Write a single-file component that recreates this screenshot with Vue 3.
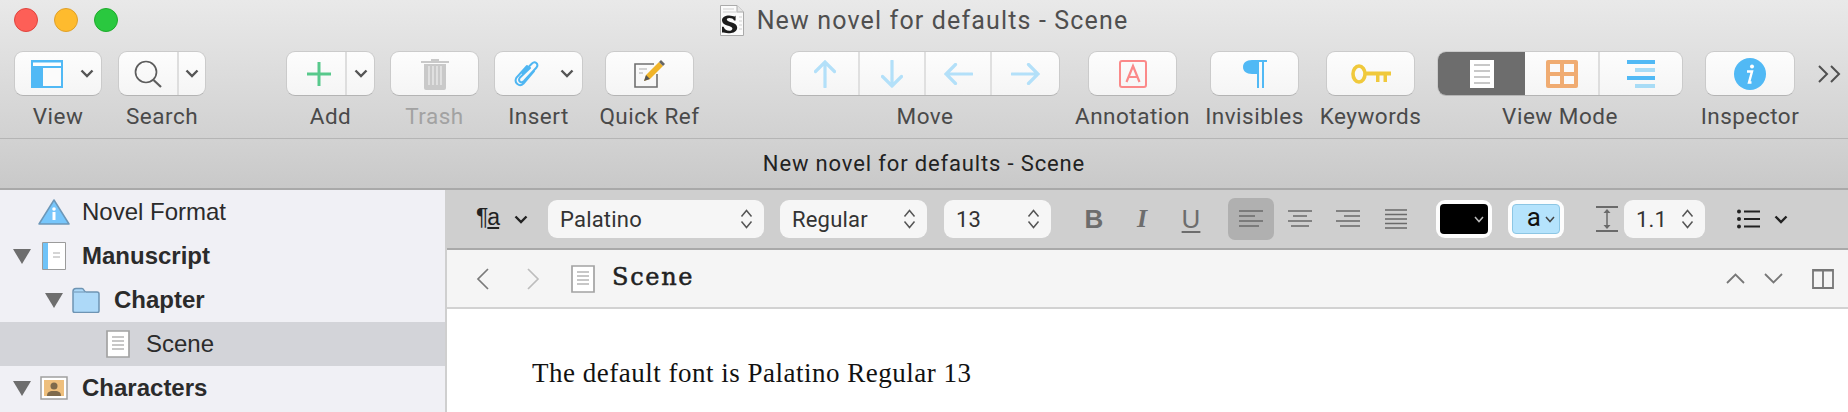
<script setup>
const rows = [
  { label: 'Novel Format', level: 0, icon: 'info', open: false, bold: false },
  { label: 'Manuscript', level: 0, icon: 'book', open: true, bold: true },
  { label: 'Chapter', level: 1, icon: 'folder', open: true, bold: true },
  { label: 'Scene', level: 2, icon: 'doc', open: false, bold: false, selected: true },
  { label: 'Characters', level: 0, icon: 'person', open: true, bold: true },
]
</script>

<template>
  <div class="window">
    <header class="chrome">
      <div class="titlebar">
        <div class="lights">
          <span class="light red"></span>
          <span class="light yellow"></span>
          <span class="light green"></span>
        </div>
        <div class="title">
          <svg width="24" height="31" viewBox="0 0 24 31">
            <path d="M.5.5H17L23.5 7V30.5H.5Z" fill="#fbfbfb" stroke="#aaa"/>
            <path d="M17 .5V7H23.5" fill="#e4e4e4" stroke="#aaa"/>
            <path d="M3 4H14M3 7H20M19 12H22M19 16H22M19 20H22M19 24H22" stroke="#cfcfcf"/>
            <path transform="translate(1.200 5) scale(.8)" d="M1 13c0-4 4-6 9-6 3 0 5 1 7 1l1-1v6h-2c-1-2-3-3-6-3-2 0-3 1-3 2 0 4 13 3 13 10 0 5-5 7-9 7-3 0-6-1-8-1H1v-7h2c1 3 4 5 7 5 2 0 4-1 4-3 0-4-13-3-13-10Z" fill="#1c1c1c"/>
          </svg>
          <span>New novel for defaults - Scene</span>
        </div>
      </div>

      <div class="toolbar">
        <div class="item view">
          <div class="btn">
            <span class="seg wide">
              <svg width="32" height="28" viewBox="0 0 32 28"><path d="M0 0H32V28H0Z" fill="#51b9f5"/><path d="M2 2.500H30V6H2Z" fill="#fff"/><path d="M12 8H30V26H12Z" fill="#fbfbfb"/></svg>
            </span>
            <span class="seg chev">
              <svg width="14" height="9" viewBox="0 0 14 9"><path d="M1.500 1.500 7 7l5.500-5.500" fill="none" stroke="#555" stroke-width="2.400"/></svg>
            </span>
          </div>
          <span class="label">View</span>
        </div>
        <div class="item search">
          <div class="btn">
            <span class="seg main">
              <svg width="28" height="28" viewBox="0 0 28 28"><circle cx="12" cy="12" r="10.500" fill="none" stroke="#5d5d5d" stroke-width="1.700"/><path d="M19.500 20 27 27" stroke="#5d5d5d" stroke-width="2.200"/></svg>
            </span>
            <span class="seg drop">
              <svg width="14" height="9" viewBox="0 0 14 9"><path d="M1.500 1.500 7 7l5.500-5.500" fill="none" stroke="#555" stroke-width="2.400"/></svg>
            </span>
          </div>
          <span class="label">Search</span>
        </div>
        <div class="item add">
          <div class="btn">
            <span class="seg main nudge">
              <svg width="24" height="24" viewBox="0 0 24 24"><path d="M10.500 0h3v10.500H24v3H13.500V24h-3V13.500H0v-3h10.500Z" fill="#58c98c"/></svg>
            </span>
            <span class="seg drop">
              <svg width="14" height="9" viewBox="0 0 14 9"><path d="M1.500 1.500 7 7l5.500-5.500" fill="none" stroke="#555" stroke-width="2.400"/></svg>
            </span>
          </div>
          <span class="label">Add</span>
        </div>
        <div class="item trash">
          <div class="btn">
            <span class="seg full">
              <svg width="28" height="32" viewBox="0 0 28 32"><path d="M10 3V1h8v2h10v2H0V3Z" fill="#c9c9c9"/><path d="M3 6H25V30a2 2 0 0 1-2 2H5a2 2 0 0 1-2-2Z" fill="#c9c9c9"/><path d="M8 8V27M12 8V27M16 8V27M20 8V27" stroke="#f2f2f2" stroke-width="1.100"/></svg>
            </span>
          </div>
          <span class="label muted">Trash</span>
        </div>
        <div class="item insert">
          <div class="btn">
            <span class="seg wide">
              <svg width="26" height="28" viewBox="0 0 26 28"><path d="M8.500 13 18 3.500c3-3 7 .5 4.500 4L10 21c-3 3-6.500 0-4-3.500L16 8M20 11 9.500 23.500c-4 4-10-.5-7-6L13 6" fill="none" stroke="#4fb6f2" stroke-width="2" stroke-linecap="round"/></svg>
            </span>
            <span class="seg chev">
              <svg width="14" height="9" viewBox="0 0 14 9"><path d="M1.500 1.500 7 7l5.500-5.500" fill="none" stroke="#555" stroke-width="2.400"/></svg>
            </span>
          </div>
          <span class="label">Insert</span>
        </div>
        <div class="item quick">
          <div class="btn">
            <span class="seg full">
              <svg width="32" height="28" viewBox="0 0 32 28"><path d="M23 14V27H1V4H20" fill="none" stroke="#6f6f6f" stroke-width="1.600"/><path d="M5 9H13M5 13H9" stroke="#aaa"/><path d="M10 21 12 15 25 2 29 6 16 19Z" fill="#f0b429"/><path d="M25 2 27 0 31 4 29 6Z" fill="#666"/><path d="M10 21 12 15 16 19Z" fill="#555"/></svg>
            </span>
          </div>
          <span class="label">Quick Ref</span>
        </div>
        <div class="item move">
          <div class="btn">
            <span class="seg arrow first">
              <svg width="22" height="28" viewBox="0 0 22 28"><path d="M11 27V2M1.500 11.500 11 2l9.500 9.500" fill="none" stroke="#b3e0f9" stroke-width="3.200" stroke-linecap="round"/></svg>
            </span>
            <span class="seg arrow">
              <svg width="22" height="28" viewBox="0 0 22 28"><path d="M11 1V26M1.500 16.500 11 26l9.500-9.500" fill="none" stroke="#b3e0f9" stroke-width="3.200" stroke-linecap="round"/></svg>
            </span>
            <span class="seg arrow">
              <svg width="29" height="22" viewBox="0 0 29 22"><path d="M28 11H2M11.500 1.500 2 11l9.500 9.500" fill="none" stroke="#b3e0f9" stroke-width="3.200" stroke-linecap="round"/></svg>
            </span>
            <span class="seg arrow last">
              <svg width="29" height="22" viewBox="0 0 29 22"><path d="M1 11H27M17.500 1.500 27 11l-9.500 9.500" fill="none" stroke="#b3e0f9" stroke-width="3.200" stroke-linecap="round"/></svg>
            </span>
          </div>
          <span class="label">Move</span>
        </div>
        <div class="item annotation">
          <div class="btn">
            <span class="seg full">
              <svg width="28" height="28" viewBox="0 0 28 28"><rect x="1" y="1" width="26" height="26" rx="2" fill="none" stroke="#fb8a8a" stroke-width="2"/><path d="M7.500 22 14 6l6.500 16M9.500 17H18.500" fill="none" stroke="#fb8a8a" stroke-width="2.200"/></svg>
            </span>
          </div>
          <span class="label">Annotation</span>
        </div>
        <div class="item invisibles">
          <div class="btn">
            <span class="seg full">
              <svg width="24" height="28" viewBox="0 0 24 28"><path d="M14 0V14H9C3 14 0 11 0 7S3 0 9 0Z" fill="#51b9f5"/><path d="M10 0H24V2H21V28H19V2H16V28H14V2H10Z" fill="#51b9f5"/></svg>
            </span>
          </div>
          <span class="label">Invisibles</span>
        </div>
        <div class="item keywords">
          <div class="btn">
            <span class="seg full">
              <svg width="40" height="20" viewBox="0 0 40 20"><ellipse cx="8" cy="10" rx="6" ry="8" fill="none" stroke="#f0c93c" stroke-width="3.600"/><path d="M14 7.500H40V11.500H36V18H32.500V11.500H28.500V18H25V11.500H14Z" fill="#f0c93c"/></svg>
            </span>
          </div>
          <span class="label">Keywords</span>
        </div>
        <div class="item viewmode">
          <div class="btn">
            <span class="seg active">
              <svg width="24" height="28" viewBox="0 0 24 28"><path d="M0 0H24V28H0Z" fill="#fff"/><path d="M4 5H20M4 11H20M4 17H20M4 23H20" stroke="#c8c8c8" stroke-width="2"/></svg>
            </span>
            <span class="seg corkboard">
              <svg width="32" height="28" viewBox="0 0 32 28"><rect width="32" height="28" rx="2" fill="#f0ac72"/><path d="M4 4H14V12H4ZM18 4H28V12H18ZM4 16H14V24H4ZM18 16H28V24H18Z" fill="#fafafa"/></svg>
            </span>
            <span class="seg outline">
              <svg width="28" height="28" viewBox="0 0 28 28"><path d="M0 0H28V4H0ZM0 16H28V20H0Z" fill="#51b9f5"/><path d="M8 8H28V12H8ZM8 24H28V28H8Z" fill="#a8dcf6"/></svg>
            </span>
          </div>
          <span class="label">View Mode</span>
        </div>
        <div class="item inspector">
          <div class="btn">
            <span class="seg full">
              <svg width="32" height="32" viewBox="0 0 32 32"><circle cx="16" cy="16" r="16" fill="#51b9f5"/><circle cx="18" cy="8.500" r="2" fill="#fff"/><path d="M13 13.500h5l-3 11h2.500" fill="none" stroke="#fff" stroke-width="2.400"/></svg>
            </span>
          </div>
          <span class="label">Inspector</span>
        </div>
        <svg class="overflow" width="23" height="18" viewBox="0 0 23 18"><path d="M1 1l8 8-8 8M13 1l8 8-8 8" fill="none" stroke="#505050" stroke-width="2"/></svg>
      </div>

      <div class="doc-title">New novel for defaults - Scene</div>
    </header>

    <div class="body">
      <aside class="sidebar">
        <div
          v-for="row in rows"
          :key="row.label"
          class="row"
          :class="{ selected: row.selected, bold: row.bold }"
          :style="{ paddingLeft: 13 + row.level * 32 + 'px' }"
        >
          <span class="disclosure">
            <svg v-if="row.open" width="18" height="15" viewBox="0 0 18 15"><path d="M0 0H18L9 15Z" fill="#6e6e6e"/></svg>
          </span>
          <span class="row-icon">
            <svg v-if="row.icon === 'info'" width="32" height="26" viewBox="0 0 32 26"><path d="M16 1 31 25H1Z" fill="#77c6fb" stroke="#6c97b8" stroke-width="1.500" stroke-linejoin="round"/><circle cx="16" cy="10" r="1.800" fill="#fff"/><path d="M14.500 13H17.500V21H14.500Z" fill="#fff"/></svg>
            <svg v-else-if="row.icon === 'book'" width="24" height="28" viewBox="0 0 24 28"><path d="M.5.5H23.500V27.500H.5Z" fill="#fff" stroke="#9b9b9b"/><path d="M1 1H6V27H1Z" fill="#6fc3f8"/><path d="M11 11H18M11 15H18" stroke="#aaa"/></svg>
            <svg v-else-if="row.icon === 'folder'" width="28" height="26" viewBox="0 0 28 26"><path d="M1 4.500C1 2 2 1.500 4 1.500H10C12 1.500 12 5 14 5H25C26.500 5 27 6 27 7V24C27 25 26.500 25.500 25 25.500H3C1.500 25.500 1 25 1 24Z" fill="#add9f8" stroke="#6e94b3" stroke-width="1.500"/><path d="M2 5H13" stroke="#6e94b3"/></svg>
            <svg v-else-if="row.icon === 'doc'" width="24" height="28" viewBox="0 0 24 28"><path d="M1 1H23V27H1Z" fill="#fff" stroke="#a3a3a3" stroke-width="1.700"/><path d="M6 7H18M6 11H18M6 15H18M6 19H18" stroke="#b5b5b5" stroke-width="1.300"/></svg>
            <svg v-else width="28" height="24" viewBox="0 0 28 24"><path d="M1 1H27V23H1Z" fill="#fff" stroke="#a0a0a0" stroke-width="1.500"/><path d="M4 4H24V20H4Z" fill="#eebf7d"/><circle cx="14" cy="10" r="3.500" fill="#7e6a4c"/><path d="M7 20c0-5 4-5 7-5s7 0 7 5Z" fill="#7e6a4c"/></svg>
          </span>
          <span class="row-label">{{ row.label }}</span>
        </div>
      </aside>

      <main class="editor">
        <div class="format">
          <span class="para">¶<u>a</u></span>
          <svg class="para-chev" width="14" height="9" viewBox="0 0 14 9"><path d="M1.500 1.500 7 7l5.500-5.500" fill="none" stroke="#222" stroke-width="2.400"/></svg>
          <div class="popup font">
            <span>Palatino</span>
            <svg width="13" height="20" viewBox="0 0 13 20"><path d="M1.500 7.500 6.500 1.500l5 6M1.500 12.500l5 6 5-6" fill="none" stroke="#555" stroke-width="1.500"/></svg>
          </div>
          <div class="popup style">
            <span>Regular</span>
            <svg width="13" height="20" viewBox="0 0 13 20"><path d="M1.500 7.500 6.500 1.500l5 6M1.500 12.500l5 6 5-6" fill="none" stroke="#555" stroke-width="1.500"/></svg>
          </div>
          <div class="popup size">
            <span>13</span>
            <svg width="13" height="20" viewBox="0 0 13 20"><path d="M1.500 7.500 6.500 1.500l5 6M1.500 12.500l5 6 5-6" fill="none" stroke="#555" stroke-width="1.500"/></svg>
          </div>
          <span class="fmt bold-b">B</span>
          <span class="fmt italic-i">I</span>
          <span class="fmt under-u">U</span>
          <div class="align current">
            <svg width="24" height="18" viewBox="0 0 24 18"><path d="M0 1H24M0 6H16M0 11H24M0 16H20" stroke="#6a6a6a" stroke-width="1.700"/></svg>
          </div>
          <div class="align">
            <svg width="24" height="18" viewBox="0 0 24 18"><path d="M0 1H24M5 6H19M0 11H24M3 16H21" stroke="#6a6a6a" stroke-width="1.700"/></svg>
          </div>
          <div class="align">
            <svg width="24" height="18" viewBox="0 0 24 18"><path d="M0 1H24M8 6H24M0 11H24M4 16H24" stroke="#6a6a6a" stroke-width="1.700"/></svg>
          </div>
          <div class="align">
            <svg width="22" height="20" viewBox="0 0 22 20"><path d="M0 1H22M0 5.500H22M0 10H22M0 14.500H22M0 19H22" stroke="#6a6a6a" stroke-width="1.600"/></svg>
          </div>
          <div class="well text-color">
            <div class="swatch black">
              <svg width="10" height="7" viewBox="0 0 10 7"><path d="M1 1 5 5.500 9 1" fill="none" stroke="#bbb" stroke-width="1.500"/></svg>
            </div>
          </div>
          <div class="well highlight">
            <div class="swatch blue">
              <span>a</span>
              <svg width="10" height="7" viewBox="0 0 10 7"><path d="M1 1 5 5.500 9 1" fill="none" stroke="#444" stroke-width="1.500"/></svg>
            </div>
          </div>
          <svg class="spacing" width="22" height="26" viewBox="0 0 22 26"><path d="M0 1H22M0 25H22" stroke="#6a6a6a" stroke-width="1.800"/><path d="M11 4V22" stroke="#6a6a6a" stroke-width="1.500"/><path d="M7.500 7 11 3l3.500 4ZM7.500 19 11 23l3.500-4Z" fill="#6a6a6a"/></svg>
          <div class="popup lines">
            <span>1.1</span>
            <svg width="13" height="20" viewBox="0 0 13 20"><path d="M1.500 7.500 6.500 1.500l5 6M1.500 12.500l5 6 5-6" fill="none" stroke="#555" stroke-width="1.500"/></svg>
          </div>
          <svg class="list" width="23" height="20" viewBox="0 0 23 20"><path d="M7 2.500H23M7 10H23M7 17.500H23" stroke="#222" stroke-width="1.800"/><circle cx="2" cy="2.500" r="2" fill="#222"/><circle cx="2" cy="10" r="2" fill="#222"/><circle cx="2" cy="17.500" r="2" fill="#222"/></svg>
          <svg class="list-chev" width="14" height="9" viewBox="0 0 14 9"><path d="M1.500 1.500 7 7l5.500-5.500" fill="none" stroke="#222" stroke-width="2.400"/></svg>
        </div>

        <div class="header">
          <svg class="back" width="13" height="22" viewBox="0 0 13 22"><path d="M12 1 2 11l10 10" fill="none" stroke="#7a7a7a" stroke-width="1.700"/></svg>
          <svg class="forward" width="13" height="22" viewBox="0 0 13 22"><path d="M1 1l10 10L1 21" fill="none" stroke="#bdbdbd" stroke-width="1.700"/></svg>
          <svg class="hdoc" width="24" height="28" viewBox="0 0 24 28"><path d="M1 1H23V27H1Z" fill="#fff" stroke="#a3a3a3" stroke-width="1.700"/><path d="M6 7H18M6 11H18M6 15H18M6 19H18" stroke="#b5b5b5" stroke-width="1.300"/></svg>
          <span class="doc-name">Scene</span>
          <svg class="up" width="19" height="11" viewBox="0 0 19 11"><path d="M1 10 9.500 1.500 18 10" fill="none" stroke="#777" stroke-width="1.800"/></svg>
          <svg class="down" width="19" height="11" viewBox="0 0 19 11"><path d="M1 1l8.500 8.500L18 1" fill="none" stroke="#777" stroke-width="1.800"/></svg>
          <svg class="split" width="22" height="20" viewBox="0 0 22 20"><path d="M1 1H21V19H1ZM11 1V19" fill="none" stroke="#777" stroke-width="1.800"/><path d="M1 1H21" stroke="#777" stroke-width="3"/></svg>
        </div>

        <div class="page">
          <p>The default font is Palatino Regular 13</p>
        </div>
      </main>
    </div>
  </div>
</template>

<style scoped>
.window {
  width: 1848px;
  height: 412px;
  overflow: hidden;
  display: flex;
  flex-direction: column;
  font-family: Roboto, "Liberation Sans", sans-serif;
  background: #fff;
}

.chrome {
  height: 190px;
  box-sizing: border-box;
  flex: none;
  background: linear-gradient(#e9e9e9, #d1d1d1 139px, #d2d2d2 140px, #c9c9c9);
  border-bottom: 2px solid #a9a9a9;
}

.titlebar {
  height: 40px;
  display: grid;
  grid-template-columns: 1fr auto 1fr;
  align-items: center;
}

.lights {
  display: flex;
  gap: 16px;
  padding-left: 14px;
}
.light {
  width: 24px;
  height: 24px;
  border-radius: 50%;
  box-sizing: border-box;
}
.red { background: #fd5f57; border: 1px solid #e0443e; }
.yellow { background: #febb2e; border: 1px solid #dfa02a; }
.green { background: #2ac83f; border: 1px solid #1eab2b; }

.title {
  display: flex;
  align-items: center;
  gap: 13px;
  font-size: 25px;
  letter-spacing: 1.150px;
  color: #4f4f4f;
}

.toolbar {
  display: flex;
  align-items: flex-start;
  height: 99px;
  padding: 11px 0 0 14px;
  box-sizing: border-box;
  border-bottom: 1px solid #b5b5b5;
}

.item {
  display: flex;
  flex-direction: column;
  align-items: center;
  flex: none;
}

.btn {
  width: 100%;
  height: 45px;
  box-sizing: border-box;
  display: flex;
  background: linear-gradient(#fdfdfd, #f5f5f5);
  border: 1px solid #cbcbcb;
  border-bottom-color: #b4b4b4;
  border-radius: 9px;
  overflow: hidden;
}

.seg {
  display: flex;
  align-items: center;
  justify-content: center;
  flex: none;
  box-sizing: border-box;
}
.seg.full { flex: 1; }
.seg.wide { width: 63px; }
.seg.chev { width: 18px; }
.seg.main { width: 58px; }
.seg.nudge { padding-left: 5px; }
.seg.drop { flex: 1; border-left: 2px solid #dedede; }
.seg.arrow { width: 66px; border-right: 2px solid #e0e0e0; }
.seg.arrow.first { width: 69px; }
.seg.arrow.last { flex: 1; border-right: none; }
.seg.active { width: 87px; background: #6d6d6d; }
.seg.corkboard { width: 73px; }
.seg.outline { flex: 1; border-left: 2px solid #dedede; }

.label {
  margin-top: 8px;
  font-size: 22.500px;
  letter-spacing: 0.500px;
  line-height: 25px;
  white-space: nowrap;
  color: #4a4a4a;
}
.label.muted { color: #a2a2a2; }

.view { width: 88px; }
.search { width: 88px; margin-left: 16px; }
.add { width: 89px; margin-left: 80px; }
.trash { width: 89px; margin-left: 15px; }
.insert { width: 89px; margin-left: 15px; }
.quick { width: 89px; margin-left: 22px; }
.move { width: 270px; margin-left: 96px; }
.annotation { width: 89px; margin-left: 28px; }
.invisibles { width: 89px; margin-left: 33px; }
.keywords { width: 89px; margin-left: 27px; }
.viewmode { width: 246px; margin-left: 22px; }
.inspector { width: 90px; margin-left: 22px; }
.overflow { flex: none; margin: 14px 0 0 23px; }

.doc-title {
  height: 49px;
  display: flex;
  align-items: center;
  justify-content: center;
  font-size: 22px;
  letter-spacing: 0.850px;
  color: #222;
}

.body {
  flex: 1;
  display: flex;
  min-height: 0;
}

.sidebar {
  width: 447px;
  flex: none;
  box-sizing: border-box;
  background: #f0f0f5;
  border-right: 2px solid #cfcfcf;
}

.row {
  height: 44px;
  display: flex;
  align-items: center;
  box-sizing: border-box;
  font-family: "Liberation Sans", Arial, sans-serif;
  font-size: 24px;
  color: #2b2b2b;
}
.row.bold { font-weight: 700; }
.row.selected { background: #d3d4d9; }
.disclosure { width: 18px; flex: none; display: flex; }
.row-icon {
  width: 46px;
  flex: none;
  display: flex;
  justify-content: center;
  align-items: center;
  margin-right: 5px;
}

.editor {
  flex: 1;
  display: flex;
  flex-direction: column;
  min-width: 0;
}

.format {
  height: 60px;
  flex: none;
  box-sizing: border-box;
  display: flex;
  align-items: center;
  padding-left: 29px;
  background: #cfcfcf;
  border-bottom: 2px solid #a9a9a9;
}
.para {
  width: 27px;
  margin-top: -4px;
  font-family: "Liberation Sans", sans-serif;
  font-size: 23px;
  color: #222;
  white-space: nowrap;
  letter-spacing: -1px;
}
.para-chev { margin-left: 11px; flex: none; }

.popup {
  height: 38px;
  box-sizing: border-box;
  flex: none;
  display: flex;
  align-items: center;
  justify-content: space-between;
  padding: 0 11px 0 12px;
  background: #f6f6f6;
  border-radius: 9px;
  font-size: 22px;
  letter-spacing: 0.200px;
  color: #333;
}
.popup.font { width: 216px; margin-left: 20px; }
.popup.style { width: 147px; margin-left: 16px; }
.popup.size { width: 107px; margin-left: 17px; }
.popup.lines { width: 81px; margin-left: 6px; }

.fmt {
  flex: none;
  width: 24px;
  text-align: center;
  font-family: "Liberation Sans", sans-serif;
  font-size: 26px;
  color: #6d6d6d;
}
.bold-b { font-weight: 700; margin-left: 31px; }
.italic-i { font-style: italic; font-family: "Liberation Serif", serif; font-weight: 700; margin-left: 24px; }
.under-u { margin-left: 25px; text-decoration: underline; text-underline-offset: 3px; }

.align {
  width: 44px;
  height: 42px;
  flex: none;
  display: flex;
  align-items: center;
  justify-content: center;
  margin-left: 4px;
  border-radius: 7px;
}
.align.current { margin-left: 25px; width: 46px; background: #b0b0b0; }

.well {
  flex: none;
  height: 38px;
  width: 56px;
  box-sizing: border-box;
  padding: 4px;
  background: #fdfdfd;
  border-radius: 9px;
}
.text-color { margin-left: 18px; }
.highlight { margin-left: 16px; }
.swatch {
  height: 100%;
  display: flex;
  align-items: center;
  justify-content: flex-end;
  gap: 4px;
  box-sizing: border-box;
  padding-right: 4px;
  border-radius: 4px;
}
.black { background: #000; }
.blue {
  background: #b5e3fc;
  border: 1px solid #8cc6e4;
  font-size: 26px;
  line-height: 1;
  color: #111;
}
.blue span { margin-top: -4px; }
.spacing { flex: none; margin-left: 32px; }
.list { flex: none; margin-left: 32px; }
.list-chev { flex: none; margin-left: 14px; }

.header {
  height: 59px;
  flex: none;
  box-sizing: border-box;
  display: flex;
  align-items: center;
  padding-left: 29px;
  background: #f5f5f5;
  border-bottom: 2px solid #d2d2d2;
}
.forward { flex: none; margin-left: 38px; }
.hdoc { flex: none; margin-left: 31px; }
.doc-name {
  margin: -3px 0 0 17px;
  font-family: "DejaVu Serif", serif;
  font-size: 24px;
  letter-spacing: 1.700px;
  color: #222;
  -webkit-text-stroke: 0.500px #222;
}
.up { flex: none; margin-left: auto; }
.down { flex: none; margin-left: 19px; }
.split { flex: none; margin: 0 14px 0 29px; }

.page {
  flex: 1;
  background: #fff;
}
.page p {
  margin: 0;
  padding: 48px 0 0 85px;
  font-family: "Liberation Serif", serif;
  font-size: 27px;
  letter-spacing: 0.500px;
  line-height: 32px;
  color: #111;
}
</style>
